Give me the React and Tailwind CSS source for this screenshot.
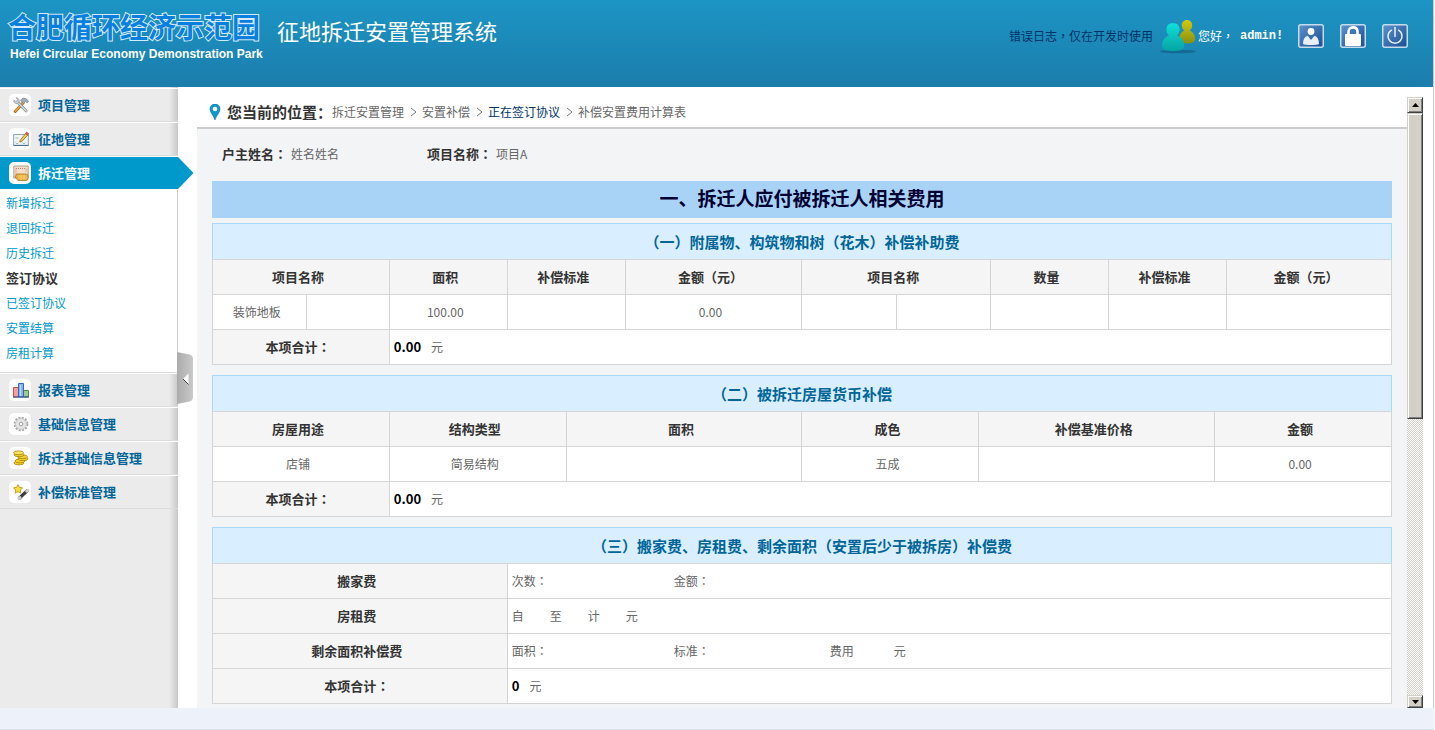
import React from "react";

const Tile = ({ children }) => (
  <span className="flex size-[22px] items-center justify-end rounded-[5px] bg-white pr-0.5">
    <svg viewBox="0 0 16 16" className="size-4" aria-hidden="true">{children}</svg>
  </span>
);

const icons = {
  tools: (
    <>
      <path d="M2.2 14.4 10 6" stroke="#b0701c" strokeWidth="3" strokeLinecap="round" />
      <path d="M2.4 14 9.8 6.2" stroke="#f0a848" strokeWidth="1.4" strokeLinecap="round" />
      <path d="M5 5.6 13.2 14" stroke="#858d95" strokeWidth="2.8" strokeLinecap="round" />
      <path d="M5 5.6 13.2 14" stroke="#dfe3e6" strokeWidth="1.2" strokeLinecap="round" />
      <path d="M7.5 3.2 10 1l3.2.6 2.4 2.8-1.5 1.4-1.6-1.3-2 2.2z" fill="#a3abb3" stroke="#6f7880" strokeWidth=".6" />
      <path d="M3 .8 4.400 2.400 4 4 2.400 4.200 1 2.800C.4 4.400 1 6 2.600 6.600 5 7 6.600 5.400 6.200 3.200 5.800 1.600 4.600.6 3 .8z" fill="#cdd2d6" stroke="#858d95" strokeWidth=".6" />
    </>
  ),
  map: (
    <>
      <path d="M.6 3.5h14.8v10.8H.6z" fill="#eef4f8" stroke="#8fa6b8" />
      <path d="M.5 14.5h15" stroke="#4f6f8c" />
      <path d="m2.500 11.500 1.500 1.500 1.500-1.500M9.500 11.500l1.500 1.500 1.500-1.500M2.500 7h3" fill="none" stroke="#9cb8c8" />
      <path d="M7.2 9.2 12.600 2.600l2 1.600L9 10.200 6.800 11z" fill="#f2cf4a" stroke="#8a6a1c" strokeWidth=".8" />
      <path d="M12.400 2.400 13.700 1l2 1.600-1.200 1.500z" fill="#e2574c" stroke="#a23a32" strokeWidth=".5" />
    </>
  ),
  deed: (
    <>
      <path d="M.8 1h14.400v12H.8z" fill="#f3dfc9" stroke="#b0a090" />
      <path d="M3 3.500h10M3 3.500v6.500M13 3.500v4" stroke="#c9806e" strokeDasharray="1 1" />
      <path d="M3.500 9h9.500l2 1v4.500l-2 1H5L2 12z" fill="#e8a83a" stroke="#a87a26" strokeWidth=".8" />
      <path d="M4.500 11h10M5 13h9.500M8 9.500v5.500M11 9.500v5.500" stroke="#fbdc84" strokeWidth=".7" />
    </>
  ),
  chart: (
    <>
      <path d="M.5 5.500h5v9.500H.5z" fill="#f5a0a0" stroke="#d04c4c" />
      <path d="M10.500 8.500h5V15h-5z" fill="#a4c894" stroke="#4c8a36" />
      <path d="M5.500 1.500h5v13.500h-5z" fill="#86b4f2" stroke="#3468b8" />
      <path d="M7.500 3v11" stroke="#c2dcfb" />
      <path d="M0 15h16" stroke="#2a4a8c" />
    </>
  ),
  gear: (
    <>
      <circle cx="8" cy="8" r="6.400" fill="none" stroke="#a8a8a8" strokeWidth="2" strokeDasharray="2 1.350" />
      <circle cx="8" cy="8" r="5.500" fill="#e4e4e4" stroke="#bcbcbc" strokeWidth=".8" />
      <circle cx="8" cy="8" r="1.800" fill="#fff" stroke="#a4a4a4" />
    </>
  ),
  coins: (
    <g fill="#f4d22c" stroke="#a87f0c" strokeWidth=".8">
      <ellipse cx="6" cy="13" rx="5" ry="1.900" />
      <ellipse cx="7" cy="11" rx="5" ry="1.900" />
      <ellipse cx="10" cy="8.800" rx="5" ry="1.900" />
      <ellipse cx="9.600" cy="6.800" rx="5" ry="1.900" />
      <ellipse cx="6" cy="4.800" rx="5" ry="1.900" />
      <ellipse cx="5.600" cy="2.800" rx="5" ry="1.900" fill="#fbe765" />
    </g>
  ),
  wand: (
    <>
      <path d="M6.500 14 14 6.800" stroke="#3c3c3c" strokeWidth="3.200" strokeLinecap="round" />
      <path d="M5.800 14.600 7 13.400M13.600 7.200l1-1" stroke="#d0d0d0" strokeWidth="2.800" strokeLinecap="round" />
      <path d="m5 .6 1.400 2.800 3.100.4-2.200 2.200.5 3.100L5 7.600 2.200 9.100l.5-3.100L.5 3.800l3.100-.4z" fill="#fbdf3c" stroke="#b88c10" strokeWidth=".8" />
    </>
  ),
};

const menu = [
  { label: "项目管理", icon: "tools" },
  { label: "征地管理", icon: "map" },
  {
    label: "拆迁管理",
    icon: "deed",
    items: ["新增拆迁", "退回拆迁", "历史拆迁", "签订协议", "已签订协议", "安置结算", "房租计算"],
  },
  { label: "报表管理", icon: "chart" },
  { label: "基础信息管理", icon: "gear" },
  { label: "拆迁基础信息管理", icon: "coins" },
  { label: "补偿标准管理", icon: "wand" },
];

const Colon = () => <span className="font-['Noto_Sans_CJK_TC',sans-serif]">：</span>;

function HeaderButton({ label, children }) {
  return (
    <button type="button" aria-label={label} className="h-6 w-[26px]">
      <svg viewBox="0 0 26 24" className="h-6 w-[26px]" aria-hidden="true">
        <defs>
          <linearGradient id="tile" x1="0" y1="0" x2="1" y2="1">
            <stop offset="0" stopColor="#5f93c8" />
            <stop offset=".5" stopColor="#3a70b0" />
            <stop offset="1" stopColor="#1c4c90" />
          </linearGradient>
        </defs>
        <rect x=".75" y=".75" width="24.5" height="22.5" rx="2" fill="url(#tile)" stroke="#c4dcee" strokeWidth="1.5" />
        {children}
      </svg>
    </button>
  );
}

function Header() {
  return (
    <header className="flex h-[87px] shrink-0 items-start bg-linear-to-b from-[#1c95c5] to-[#1b7dab]">
      <div className="w-[277px] shrink-0 pt-2 pl-2">
        <div className="text-[28px] leading-9 font-bold whitespace-nowrap text-[#0a80dc] [paint-order:stroke_fill] [-webkit-text-stroke:2px_#d3ebfa]">
          合肥循环经济示范园
        </div>
        <div className="pl-0.5 font-['Liberation_Sans',sans-serif] text-xs leading-5 font-bold whitespace-nowrap text-white">
          Hefei Circular Economy Demonstration Park
        </div>
      </div>
      <h1 className="pt-3 text-[22px] leading-9 whitespace-nowrap text-white">征地拆迁安置管理系统</h1>
      <div className="ml-auto flex items-center pt-[18px] pr-[25px] text-xs text-white">
        <a href="#log" className="text-[#003366]">
          错误日志<span className="font-['Noto_Sans_CJK_TC',sans-serif]">，</span>仅在开发时使用
        </a>
        <svg viewBox="0 0 38 36" className="ml-[7px] h-9 w-[38px]" aria-hidden="true">
          <defs>
            <linearGradient id="teal" x1="0" y1="0" x2="0" y2="1">
              <stop offset="0" stopColor="#0fe0d8" />
              <stop offset="1" stopColor="#06a3a4" />
            </linearGradient>
            <linearGradient id="olive" x1="0" y1="0" x2="0" y2="1">
              <stop offset="0" stopColor="#d3c80f" />
              <stop offset="1" stopColor="#87900f" />
            </linearGradient>
          </defs>
          <ellipse cx="18" cy="33.5" rx="18" ry="1.8" fill="#0f5f88" opacity=".7" />
          <path d="M27 2c3.2 0 5.200 2.400 5.200 5.200 0 2.400-1 4-2.400 5.200 3.600 1.600 5.400 5 5.400 8.600 0 3-3 4.400-8 4.400s-8-1.400-8-4.400c0-3.600 1.600-7 5-8.600-1.400-1.200-2.400-2.800-2.400-5.200C21.800 4.400 23.800 2 27 2z" fill="url(#olive)" />
          <path d="M13 5c4 0 6.600 2.800 6.600 6.400 0 2.600-1 4.600-2.600 6 4.600 1.600 7.400 5.600 7.400 10 0 4-4.400 5.600-11.400 5.600S2 31.400 2 27.400c0-4.400 2.600-8.400 7-10-1.600-1.400-2.600-3.400-2.600-6C6.400 7.800 9 5 13 5z" fill="url(#teal)" />
        </svg>
        <span className="w-[42px]">
          您好<span className="font-['Noto_Sans_CJK_TC',sans-serif]">，</span>
        </span>
        <b className="w-[58px] font-['Liberation_Mono',monospace]">admin!</b>
        <div className="flex gap-4">
          <HeaderButton label="个人信息">
            <circle cx="13" cy="7.500" r="3.400" fill="#fff" />
            <path d="M5 20c0-4.400 1.500-7.200 4.600-8.200L13 16l3.400-4.200C19.500 12.800 21 15.600 21 20c-2 1.300-14 1.300-16 0z" fill="#e8eef6" />
          </HeaderButton>
          <HeaderButton label="修改密码">
            <path d="M8.500 11V8c0-2.800 1.800-4.600 4.500-4.600s4.500 1.800 4.500 4.600v3" fill="none" stroke="#fff" strokeWidth="2.600" />
            <rect x="5" y="10" width="16" height="12" rx="1" fill="#fff" />
          </HeaderButton>
          <HeaderButton label="退出">
            <path d="M9.400 6.200a7 7 0 1 0 7.200 0" fill="none" stroke="#e8f2fa" strokeWidth="1.500" strokeLinecap="round" />
            <path d="M13 3.500v9" stroke="#e8f2fa" strokeWidth="1.500" strokeLinecap="round" />
          </HeaderButton>
        </div>
      </div>
    </header>
  );
}

function Sidebar() {
  return (
    <aside className="relative w-[178px] shrink-0 bg-[#ebebeb] bg-linear-to-r from-[#ebebeb] from-95% to-[#c8c8c8]">
      <nav className="pt-px">
        {menu.map((group) => (
          <div key={group.label}>
            <button
              type="button"
              aria-expanded={Boolean(group.items)}
              className={
                group.items
                  ? "relative flex h-[34px] w-full items-center gap-[7px] border-y border-white bg-[#0099cc] pl-[9px] text-[13px] font-bold text-white"
                  : "flex h-[34px] w-full items-center gap-[7px] border-t border-b border-t-white border-b-[#dcdcdc] pl-[9px] text-[13px] font-bold text-[#006699]"
              }
            >
              <Tile>{icons[group.icon]}</Tile>
              {group.label}
              {group.items && (
                <svg viewBox="0 0 16 32" className="absolute top-0 left-full z-10 h-8 w-4" aria-hidden="true">
                  <path d="M0 0 15.500 16 0 32z" fill="#0099cc" />
                </svg>
              )}
            </button>
            {group.items && (
              <ul className="border-r border-b border-r-[#cccccc] border-b-[#dcdcdc] bg-white pt-px pb-1.5">
                {group.items.map((item) => (
                  <li key={item} className="h-[25px] pl-1.5 text-xs leading-6">
                    <a
                      href="#menu"
                      className={item === "签订协议" ? "text-[13px] font-bold text-[#333333]" : "text-[#0099cc]"}
                    >
                      {item}
                    </a>
                  </li>
                ))}
              </ul>
            )}
          </div>
        ))}
      </nav>
      <button type="button" aria-label="收起菜单" className="absolute top-[264px] left-[177px] h-[54px] w-4">
        <svg viewBox="0 0 16 54" className="h-[54px] w-4" aria-hidden="true">
          <defs>
            <linearGradient id="grip">
              <stop offset="0" stopColor="#ababab" />
              <stop offset="1" stopColor="#c9c9c9" />
            </linearGradient>
          </defs>
          <path d="M0 1 12.500 3.500Q16 4.500 16 8v38q0 3.500-3.500 4.500L0 53z" fill="url(#grip)" />
          <path d="M11.500 22.500v11L6 28z" fill="#fff" />
          <path d="M6 28l5.500 5.500" stroke="#444" />
        </svg>
      </button>
    </aside>
  );
}

const th = "h-[35px] border-r border-b border-[#d5d5d5] bg-[#f5f5f5] pr-1.5 text-[13px] font-bold text-[#333333]";
const td = "h-[35px] border-r border-b border-[#d5d5d5] bg-white pr-1.5 text-center";
const tdLeft = "h-[35px] border-r border-b border-[#d5d5d5] bg-white pl-1 text-left";

function Sheet({ title, cols, children }) {
  return (
    <table className="mb-2.5 w-full table-fixed border-separate border-spacing-0 border-t border-l border-[#d5d5d5] text-xs">
      <caption className="h-9 border border-b-0 border-[#a9d8f8] bg-[#d9eeff] text-[15px] leading-9 font-bold text-[#006699]">
        {title}
      </caption>
      <colgroup>
        {cols.map((w, i) => (
          <col key={i} style={{ width: `${w}%` }} />
        ))}
      </colgroup>
      <tbody>{children}</tbody>
    </table>
  );
}

function Total({ span, amount, colSpan }) {
  return (
    <tr>
      <th scope="row" colSpan={span} className={th}>本项合计<Colon /></th>
      <td colSpan={colSpan} className={tdLeft}>
        <b className="mr-2.5 text-[13px] text-black">{amount}</b>元
      </td>
    </tr>
  );
}

function Content() {
  return (
    <div className="px-[15px] pb-4 text-xs text-[#666666]">
      <dl className="flex h-[52px] items-center pb-0.5 pl-2.5">
        <div className="flex w-[205px] items-center gap-1">
          <dt className="text-[13px] font-bold text-[#333333]">户主姓名<Colon /></dt>
          <dd>姓名姓名</dd>
        </div>
        <div className="flex items-center gap-1">
          <dt className="text-[13px] font-bold text-[#333333]">项目名称<Colon /></dt>
          <dd>项目A</dd>
        </div>
      </dl>
      <h2 className="mb-[5px] h-[37px] bg-[#a9d3f6] text-center text-[19px] leading-[34px] font-bold text-[#000033]">
        一、拆迁人应付被拆迁人相关费用
      </h2>

      <Sheet title="（一）附属物、构筑物和树（花木）补偿补助费" cols={[8, 7, 10, 10, 15, 8, 8, 10, 10, 14]}>
        <tr>
          <th colSpan={2} className={th}>项目名称</th>
          <th className={th}>面积</th>
          <th className={th}>补偿标准</th>
          <th className={th}>金额（元）</th>
          <th colSpan={2} className={th}>项目名称</th>
          <th className={th}>数量</th>
          <th className={th}>补偿标准</th>
          <th className={th}>金额（元）</th>
        </tr>
        <tr>
          {["装饰地板", "", "100.00", "", "0.00", "", "", "", "", ""].map((v, i) => (
            <td key={i} className={td}>{v}</td>
          ))}
        </tr>
        <Total span={2} amount="0.00" colSpan={8} />
      </Sheet>

      <Sheet title="（二）被拆迁房屋货币补偿" cols={[15, 15, 20, 15, 20, 15]}>
        <tr>
          {["房屋用途", "结构类型", "面积", "成色", "补偿基准价格", "金额"].map((v) => (
            <th key={v} className={th}>{v}</th>
          ))}
        </tr>
        <tr>
          {["店铺", "简易结构", "", "五成", "", "0.00"].map((v, i) => (
            <td key={i} className={td}>{v}</td>
          ))}
        </tr>
        <Total span={1} amount="0.00" colSpan={5} />
      </Sheet>

      <Sheet title="（三）搬家费、房租费、剩余面积（安置后少于被拆房）补偿费" cols={[25, 75]}>
        <tr>
          <th scope="row" className={th}>搬家费</th>
          <td className={tdLeft}>
            <div className="flex">
              <span className="w-[162px]">次数<Colon /></span>
              <span>金额<Colon /></span>
            </div>
          </td>
        </tr>
        <tr>
          <th scope="row" className={th}>房租费</th>
          <td className={tdLeft}>
            <div className="flex gap-[26px]">
              <span>自</span>
              <span>至</span>
              <span>计</span>
              <span>元</span>
            </div>
          </td>
        </tr>
        <tr>
          <th scope="row" className={th}>剩余面积补偿费</th>
          <td className={tdLeft}>
            <div className="flex">
              <span className="w-[162px]">面积<Colon /></span>
              <span className="w-[156px]">标准<Colon /></span>
              <span className="w-16">费用</span>
              <span>元</span>
            </div>
          </td>
        </tr>
        <Total span={1} amount="0" colSpan={1} />
      </Sheet>
    </div>
  );
}

const Sep = () => (
  <svg viewBox="0 0 18 12" className="h-3 w-[18px]" aria-hidden="true">
    <path d="M7 2l5 4-5 4" fill="none" stroke="#777" />
  </svg>
);

const bevel =
  "border border-t-[#d4d0c8] border-r-[#404040] border-b-[#404040] border-l-[#d4d0c8] bg-[#d4d0c8] shadow-[inset_1px_1px_0_#ffffff,inset_-1px_-1px_0_#808080]";

function ScrollBar() {
  return (
    <div className="flex w-4 shrink-0 flex-col bg-white bg-[repeating-conic-gradient(#d4d0c8_0_25%,#ffffff_0_50%)] bg-size-[2px_2px]">
      <button type="button" aria-label="向上滚动" className={"flex h-4 shrink-0 items-center justify-center " + bevel}>
        <svg viewBox="0 0 7 4" className="h-1 w-[7px]" aria-hidden="true"><path d="M3.500 0 7 4H0z" fill="#000" /></svg>
      </button>
      <div className={"h-1/2 " + bevel} />
      <button type="button" aria-label="向下滚动" className={"mt-auto flex h-[13px] shrink-0 items-center justify-center " + bevel}>
        <svg viewBox="0 0 7 4" className="h-1 w-[7px]" aria-hidden="true"><path d="M0 0h7L3.500 4z" fill="#000" /></svg>
      </button>
    </div>
  );
}

export default function App() {
  return (
    <div className="flex h-screen flex-col bg-[#f8f8f8] pr-px font-['Noto_Sans_CJK_SC',sans-serif]">
      <div className="flex min-h-0 flex-1 flex-col border-r border-[#cccccc] bg-white">
        <Header />
        <div className="flex min-h-0 flex-1">
          <Sidebar />
          <div className="flex min-w-0 flex-1 pt-2.5 pr-2.5 pl-[19px]">
            <main className="flex min-w-0 flex-1 flex-col overflow-y-auto bg-[#f3f4f6] [scrollbar-width:none]">
              <div className="flex h-8 shrink-0 items-center border-b-2 border-[#cccccc] bg-white pl-3 text-xs text-[#666666]">
                <svg viewBox="0 0 12 16" className="mr-1.5 h-4 w-3" aria-hidden="true">
                  <path d="M6 0C9 0 11 2.200 11 5c0 3.500-3.500 6-5 11C4.500 11 1 8.500 1 5c0-2.800 2-5 5-5z" fill="#0f98cc" stroke="#0b6f9c" strokeWidth=".6" />
                  <circle cx="6" cy="5" r="2.300" fill="#fff" />
                </svg>
                <strong className="text-[15px] text-[#333333]">您当前的位置：</strong>
                <span>拆迁安置管理</span>
                <Sep />
                <span>安置补偿</span>
                <Sep />
                <a href="#signing" className="text-[#003366]">正在签订协议</a>
                <Sep />
                <span>补偿安置费用计算表</span>
              </div>
              <Content />
            </main>
            <ScrollBar />
          </div>
        </div>
      </div>
      <footer className="h-[22px] shrink-0 border-b border-[#d8e3ee] bg-[#ecf1fa]" />
    </div>
  );
}
